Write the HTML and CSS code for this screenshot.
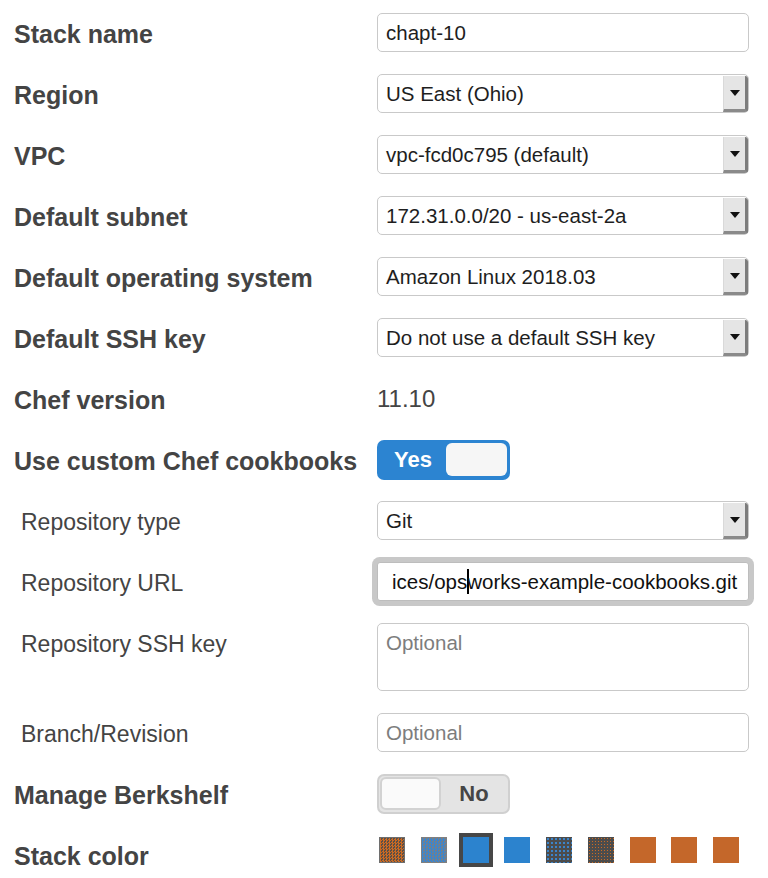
FILE: index.html
```html
<!DOCTYPE html>
<html>
<head>
<meta charset="utf-8">
<link rel="stylesheet" href="styles.css">
</head>
<body>
<form class="form">
  <div class="label">Stack name</div>
  <div class="field"><span class="val">chapt-10</span></div>

  <div class="label">Region</div>
  <div class="field select"><span class="val">US East (Ohio)</span><span class="arrow"><i class="tri"></i></span></div>

  <div class="label">VPC</div>
  <div class="field select"><span class="val">vpc-fcd0c795 (default)</span><span class="arrow"><i class="tri"></i></span></div>

  <div class="label">Default subnet</div>
  <div class="field select"><span class="val">172.31.0.0/20 - us-east-2a</span><span class="arrow"><i class="tri"></i></span></div>

  <div class="label">Default operating system</div>
  <div class="field select"><span class="val">Amazon Linux 2018.03</span><span class="arrow"><i class="tri"></i></span></div>

  <div class="label">Default SSH key</div>
  <div class="field select"><span class="val">Do not use a default SSH key</span><span class="arrow"><i class="tri"></i></span></div>

  <div class="label">Chef version</div>
  <div class="static">11.10</div>

  <div class="label">Use custom Chef cookbooks</div>
  <div class="ctl"><div class="toggle on"><span class="ttext">Yes</span><span class="knob"></span></div></div>

  <div class="label sub">Repository type</div>
  <div class="field select"><span class="val">Git</span><span class="arrow"><i class="tri"></i></span></div>

  <div class="label sub">Repository URL</div>
  <div class="field focus"><span class="val url">ices/ops<span class="caret"></span>works-example-cookbooks.git</span></div>

  <div class="label sub top">Repository SSH key</div>
  <div class="field area"><span class="val ph">Optional</span></div>

  <div class="label sub">Branch/Revision</div>
  <div class="field"><span class="val ph">Optional</span></div>

  <div class="label">Manage Berkshelf</div>
  <div class="ctl"><div class="toggle off"><span class="knob"></span><span class="ttext">No</span></div></div>

  <div class="label">Stack color</div>
  <div class="swatches">
    <span class="sw s1"></span>
    <span class="sw s2"></span>
    <span class="sw s3 sel"></span>
    <span class="sw s4"></span>
    <span class="sw s5"></span>
    <span class="sw s6"></span>
    <span class="sw s7"></span>
    <span class="sw s8"></span>
    <span class="sw s9"></span>
  </div>
</form>
</body>
</html>
```
FILE: styles.css
```css
html, body {
  margin: 0;
  padding: 0;
  background: #ffffff;
}
body {
  font-family: "Liberation Sans", Arial, Helvetica, sans-serif;
  color: #444444;
}
.form {
  display: grid;
  grid-template-columns: 363px 372px;
  row-gap: 22px;
  padding: 13px 0 0 14px;
  align-items: center;
}
.label {
  font-weight: bold;
  font-size: 25px;
  line-height: 36px;
  padding-top: 3px;
  color: #444444;
  white-space: nowrap;
}
.label.sub {
  font-weight: normal;
  font-size: 23px;
  padding-left: 7px;
}
.label.top {
  align-self: start;
}
.field {
  box-sizing: border-box;
  height: 39px;
  border: 1px solid #c9c9c9;
  border-radius: 5px;
  display: flex;
  align-items: center;
  background: #fff;
}
.val {
  font-size: 20.5px;
  color: #1e1e1e;
  padding-left: 8px;
  flex: 1;
  white-space: nowrap;
  overflow: hidden;
}
.val.ph {
  color: #7d7d7d;
}
.select {
  align-items: stretch;
}
.select .val {
  display: flex;
  align-items: center;
}
.arrow {
  width: 21px;
  margin-top: 1px;
  border-left: 1px solid #d9d9d9;
  background: #e5e5e5;
  border-right: 3px solid #7c7c7c;
  border-bottom: 3px solid #8a8a8a;
  border-radius: 0 3px 3px 0;
  display: flex;
  align-items: center;
  justify-content: center;
}
.tri {
  width: 0;
  height: 0;
  border-left: 5px solid transparent;
  border-right: 5px solid transparent;
  border-top: 6px solid #111;
  margin-top: 1px;
}
.static {
  height: 39px;
  display: flex;
  align-items: center;
  font-size: 24px;
  color: #444;
}
.ctl {
  height: 39px;
  display: flex;
  align-items: center;
}
.toggle {
  box-sizing: border-box;
  width: 133px;
  height: 40px;
  border-radius: 7px;
  display: flex;
  align-items: center;
  padding: 3px;
}
.toggle.on {
  background: #2c84d1;
}
.toggle.off {
  background: #e4e4e4;
  border: 2px solid #d0d0d0;
  padding: 1px;
}
.ttext {
  flex: 1;
  text-align: center;
  font-weight: bold;
  font-size: 22px;
}
.toggle.on .ttext {
  color: #ffffff;
}
.toggle.off .ttext {
  color: #454545;
}
.knob {
  width: 61px;
  height: 33px;
  border-radius: 6px;
  background: #f6f6f6;
}
.toggle.off .knob {
  height: 33px;
  border: 2px solid #d2d2d2;
  box-sizing: border-box;
  background: #fafafa;
}
.focus {
  box-shadow: 0 0 0 5px #c8c8c8;
  border-color: #bdbdbd;
  border-radius: 3px;
}
.url {
  padding-left: 14px;
  color: #111;
  display: flex;
  align-items: center;
}
.caret {
  display: inline-block;
  width: 1.5px;
  height: 25px;
  background: #000;
  margin-right: -1.5px;
}
.area {
  height: 68px;
  align-items: flex-start;
}
.area .val {
  padding-top: 7px;
}
.swatches {
  display: flex;
  gap: 15.75px;
  padding-left: 2px;
  align-self: start;
  margin-top: 2px;
}
.sw {
  width: 26px;
  height: 26px;
  display: block;
}
.sel {
  box-shadow: 0 0 0 4px #474747;
}
.s1 {
  background: repeating-conic-gradient(#cc6a22 0 25%, #5a4f48 0 50%) 0 0 / 3px 3px;
  box-shadow: inset 0 0 0 1px #6e6e6e;
}
.s2 {
  background: repeating-conic-gradient(#3a86cf 0 25%, #7a7f86 0 50%) 0 0 / 3px 3px;
  box-shadow: inset 0 0 0 1px #808080;
}
.s3 {
  background: #2c83ce;
}
.s4 {
  background: #2c83ce;
}
.s5 {
  background: radial-gradient(circle, #3a86cf 0.7px, transparent 0.9px) 0 0 / 4px 4px, #4c4c4c;
}
.s6 {
  background: radial-gradient(circle, #cc6a22 0.7px, transparent 0.9px) 0 0 / 3px 3px, #4c4c4c;
}
.s7, .s8, .s9 {
  background: #c4672a;
}
```
